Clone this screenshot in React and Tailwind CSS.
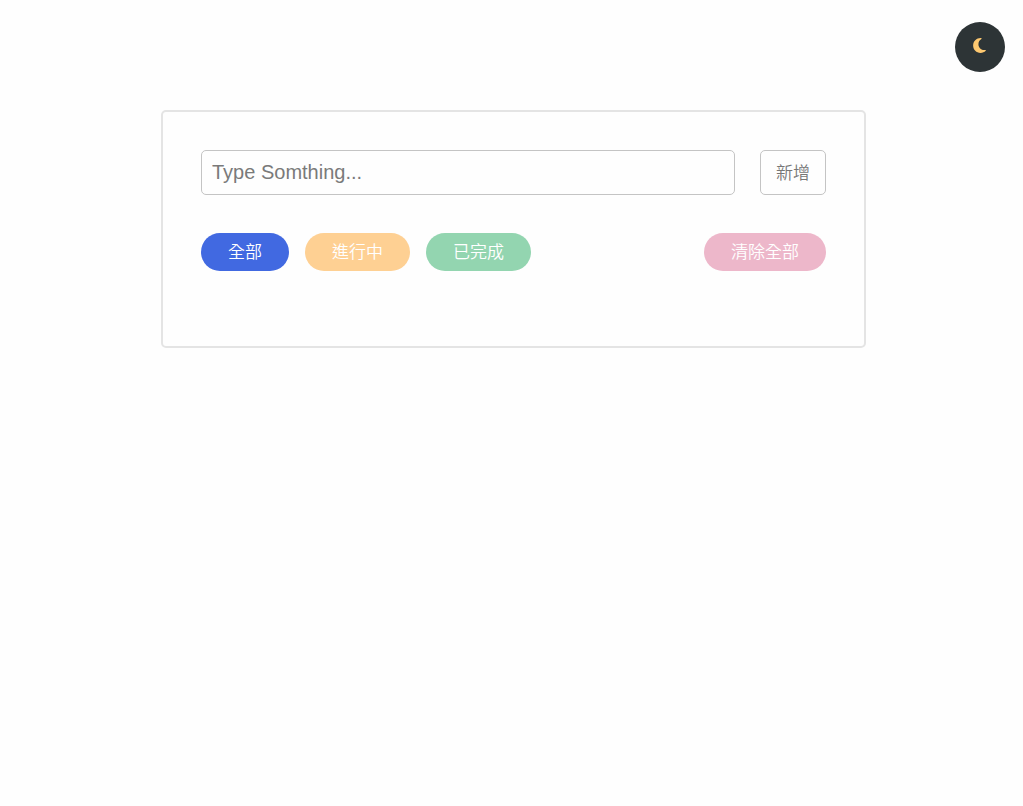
import { useState } from "react";
import { FaMoon } from "react-icons/fa6";

export default function App() {
  const [text, setText] = useState("");
  return (
    <div className="min-h-screen bg-[#fefefe] pt-[22px] pr-[18px] pl-[22px] font-['Liberation_Sans','Noto_Sans_CJK_TC',sans-serif]">
      <header className="flex justify-end">
        <button type="button" aria-label="Dark mode" className="flex size-[50px] items-center justify-center rounded-full bg-[#2d3436] pr-[2px] pb-[3px] text-[17px] text-[#fdc870]">
          <FaMoon aria-hidden="true" />
        </button>
      </header>
      <main className="mx-auto mt-[38px] max-w-[705px] rounded-[5px] border-2 border-[#e4e4e4] px-[38px] pt-[38px] pb-[75px]">
        <form className="flex gap-[25px]" onSubmit={(e) => e.preventDefault()}>
          <input
            type="text"
            aria-label="Todo"
            placeholder="Type Somthing..."
            value={text}
            onChange={(e) => setText(e.target.value)}
            className="h-[45px] min-w-0 flex-1 rounded-[5px] border border-[#c4c4c4] bg-transparent px-[10px] text-[20px] text-[#333333] placeholder:text-[#7a7a7a]"
          />
          <button type="submit" className="h-[45px] w-[66px] rounded-[5px] border border-[#c4c4c4] pt-[2px] text-[17px] font-[350] text-[#777777]">新增</button>
        </form>
        <div className="mt-[38px] flex flex-wrap gap-4 text-[17px] leading-[38px] font-[350] text-white">
          <button type="button" className="h-[38px] rounded-full bg-[#4169e1] px-[27px] pt-px">全部</button>
          <button type="button" className="h-[38px] rounded-full bg-[#fed093] px-[27px] pt-px">進行中</button>
          <button type="button" className="h-[38px] rounded-full bg-[#93d5b0] px-[27px] pt-px">已完成</button>
          <button type="button" className="ml-auto h-[38px] rounded-full bg-[#edb7ca] px-[27px] pt-px">清除全部</button>
        </div>
      </main>
    </div>
  );
}
